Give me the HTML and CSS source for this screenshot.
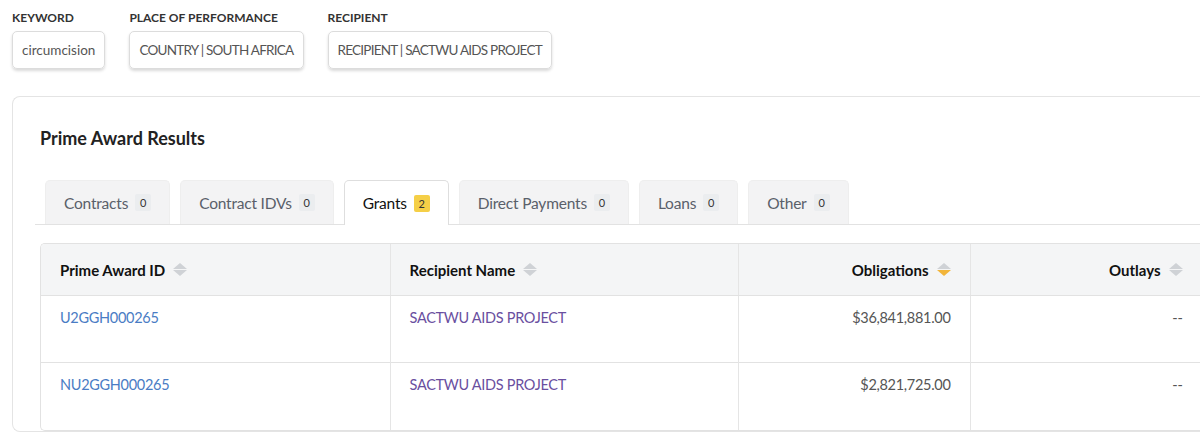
FILE: index.html
```html
<!DOCTYPE html>
<html lang="en">
<head>
    <meta charset="UTF-8">
    <meta name="viewport" content="width=device-width, initial-scale=1.0">
    <title>Award Search</title>
    <link rel="stylesheet" href="styles.css">
</head>
<body>

    <div class="filters">
        <div class="filter-group">
            <div class="filter-label">Keyword</div>
            <div class="chip">circumcision</div>
        </div>
        <div class="filter-group">
            <div class="filter-label">Place of Performance</div>
            <div class="chip caps">COUNTRY | SOUTH AFRICA</div>
        </div>
        <div class="filter-group">
            <div class="filter-label">Recipient</div>
            <div class="chip caps">RECIPIENT | SACTWU AIDS PROJECT</div>
        </div>
    </div>

    <div class="card">
        <h2 class="card-title">Prime Award Results</h2>

        <div class="tabs">
            <div class="tab">Contracts <span class="count">0</span></div>
            <div class="tab">Contract IDVs <span class="count">0</span></div>
            <div class="tab active">Grants <span class="count">2</span></div>
            <div class="tab">Direct Payments <span class="count">0</span></div>
            <div class="tab">Loans <span class="count">0</span></div>
            <div class="tab">Other <span class="count">0</span></div>
        </div>

        <div class="table-wrap">
            <table>
                <colgroup>
                    <col class="col-id">
                    <col class="col-name">
                    <col class="col-money">
                    <col class="col-out">
                </colgroup>
                <thead>
                    <tr>
                        <th><div class="th-inner">Prime Award ID
                            <svg class="sort" width="14" height="13" viewBox="0 0 14 13"><path class="up" d="M7 0L14 6H0z"/><path class="down" d="M0 7H14L7 13z"/></svg>
                        </div></th>
                        <th><div class="th-inner">Recipient Name
                            <svg class="sort" width="14" height="13" viewBox="0 0 14 13"><path class="up" d="M7 0L14 6H0z"/><path class="down" d="M0 7H14L7 13z"/></svg>
                        </div></th>
                        <th><div class="th-inner right">Obligations
                            <svg class="sort" width="14" height="13" viewBox="0 0 14 13"><path class="up" d="M7 0L14 6H0z"/><path class="down on" d="M0 7H14L7 13z"/></svg>
                        </div></th>
                        <th class="last"><div class="th-inner right">Outlays
                            <svg class="sort" width="14" height="13" viewBox="0 0 14 13"><path class="up" d="M7 0L14 6H0z"/><path class="down" d="M0 7H14L7 13z"/></svg>
                        </div></th>
                    </tr>
                </thead>
                <tbody>
                    <tr>
                        <td><a class="award-link" href="#">U2GGH000265</a></td>
                        <td><a class="recipient-link" href="#">SACTWU AIDS PROJECT</a></td>
                        <td class="num">$36,841,881.00</td>
                        <td class="num last">--</td>
                    </tr>
                    <tr>
                        <td><a class="award-link" href="#">NU2GGH000265</a></td>
                        <td><a class="recipient-link" href="#">SACTWU AIDS PROJECT</a></td>
                        <td class="num">$2,821,725.00</td>
                        <td class="num last">--</td>
                    </tr>
                </tbody>
            </table>
        </div>
    </div>

</body>
</html>
```

FILE: styles.css
```css
body {
    font-family: Lato, "Liberation Sans", sans-serif;
    background-color: #fff;
    color: #333;
    margin: 0;
    overflow: hidden;
}

/* Active filters row */
.filters {
    display: flex;
    gap: 24px;
    padding: 11px 12px 0 12px;
}

.filter-label {
    font-size: 12px;
    font-weight: bold;
    text-transform: uppercase;
    color: #333;
    line-height: 14px;
    margin-bottom: 6px;
}

.chip {
    display: inline-block;
    font-size: 13.5px;
    color: #555;
    line-height: 36px;
    padding: 0 9px;
    border: 1px solid #dcdcdc;
    border-radius: 5px;
    box-shadow: 0 2px 3px rgba(0, 0, 0, 0.15);
}

.chip.caps {
    letter-spacing: -0.75px;
}

/* Results card (runs off the right side of the page) */
.card {
    margin: 27px 0 0 12px;
    border: 1px solid #e4e4e4;
    border-right: none;
    border-radius: 8px 0 0 8px;
    padding: 0 0 0 27px;
}

.card-title {
    font-size: 18px;
    font-weight: bold;
    color: #222;
    margin: 0;
    padding-top: 29px;
    line-height: 24px;
}

/* Award type tabs */
.tabs {
    display: flex;
    gap: 10px;
    margin: 30px 0 0 -5px;
    padding-left: 10px;
    border-bottom: 1px solid #e2e2e2;
}

.tab {
    display: flex;
    align-items: center;
    gap: 7px;
    height: 43px;
    padding: 0 18px;
    background-color: #f3f3f4;
    border: 1px solid #eeeeee;
    border-bottom: none;
    border-radius: 5px 5px 0 0;
    font-size: 15.5px;
    letter-spacing: -0.2px;
    color: #5a606a;
    margin-bottom: -1px;
}

.tab.active {
    background-color: #fff;
    border-color: #dedede;
    color: #111;
    height: 44px;
}

.count {
    display: inline-block;
    min-width: 16px;
    height: 17px;
    line-height: 17px;
    text-align: center;
    font-size: 11px;
    letter-spacing: 0;
    color: #333;
    background-color: #ebedef;
    border-radius: 2px;
}

.tab.active .count {
    background-color: #f5cf47;
}

.table-wrap {
    margin-top: 18px;
    border: 1px solid #e2e2e2;
    border-right: none;
    border-radius: 5px 0 0 5px;
    overflow: hidden;
}

table {
    border-collapse: collapse;
    table-layout: fixed;
    width: 1200px;
}

.col-id { width: 349px; }
.col-name { width: 348px; }
.col-money { width: 232px; }
.col-out { width: 271px; }

table th, table td {
    border-right: 1px solid #e5e5e5;
    text-align: left;
    padding: 0 19px;
}

table th {
    background-color: #f4f5f6;
    font-size: 15px;
    font-weight: bold;
    color: #111;
    height: 51px;
    border-bottom: 1px solid #e2e2e2;
    white-space: nowrap;
}

.th-inner {
    display: flex;
    align-items: center;
    gap: 8px;
}

.th-inner.right {
    justify-content: flex-end;
}

table td {
    font-size: 14.5px;
    letter-spacing: -0.3px;
    color: #555;
    height: 67px;
    vertical-align: top;
    padding-top: 12px;
    line-height: 20px;
    box-sizing: border-box;
}

tbody tr + tr td {
    border-top: 1px solid #e2e2e2;
}

.num {
    text-align: right !important;
}

table .last {
    padding-right: 58px;
}

.award-link {
    color: #4a7cc4;
    text-decoration: none;
}

.recipient-link {
    color: #6a4f9f;
    text-decoration: none;
}

/* Sort arrows */
.sort {
    flex: none;
    display: block;
}

.sort path {
    fill: #cfd2d6;
}

.sort path.on {
    fill: #f2b53a;
}
```
